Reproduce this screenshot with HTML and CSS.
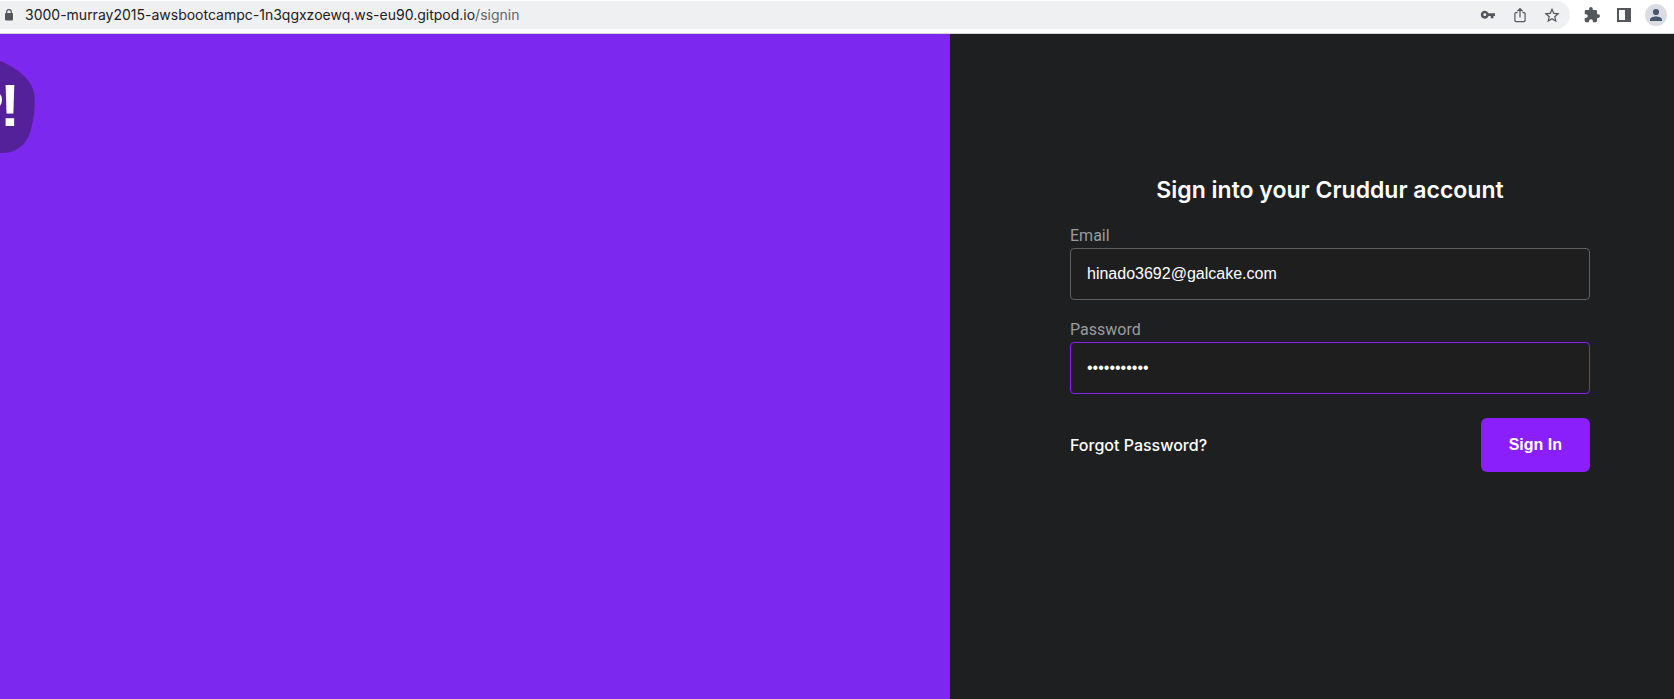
FILE: index.html
```html
<!DOCTYPE html>
<html lang="en">
<head>
<meta charset="utf-8">
<title>Cruddur - Sign in</title>
<link rel="stylesheet" href="styles.css">
</head>
<body>
<header class="toolbar">
  <div class="address">
    <svg class="lock" width="10" height="12" viewBox="0 0 10 12" aria-hidden="true"><rect x="1" y="4" width="8" height="7.500" rx="1" fill="#54575c"/><path d="M2.700 4.500V3a2.300 2.300 0 0 1 4.600 0v1.500" fill="none" stroke="#54575c" stroke-width="1.200"/></svg>
    <span class="url">3000-murray2015-awsbootcampc-1n3qgxzoewq.ws-eu90.gitpod.io<span class="path">/signin</span></span>
    <button class="tool" type="button" aria-label="Passwords"><svg width="16" height="16" viewBox="0 0 16 16"><path fill="#54575c" fill-rule="evenodd" d="M4.800 3.700a4 4 0 1 0 3.800 5.300h2.100v2.300h2.800V9H15V6.300H8.500a4 4 0 0 0-3.700-2.600zm0 2.500a1.450 1.450 0 1 1 0 2.900 1.450 1.450 0 0 1 0-2.900z"/></svg></button>
    <button class="tool" type="button" aria-label="Share"><svg width="16" height="16" viewBox="0 0 16 16" fill="none" stroke="#54575c" stroke-width="1.200"><path d="M5.500 5.600H3.900a1 1 0 0 0-1 1v7a1 1 0 0 0 1 1h8.200a1 1 0 0 0 1-1v-7a1 1 0 0 0-1-1h-1.600M8 10.500V1.800M5.200 4.300 8 1.500l2.800 2.800"/></svg></button>
    <button class="tool" type="button" aria-label="Bookmark"><svg width="16" height="16" viewBox="1 0 22 23"><path fill="#54575c" d="M23 9l-7.900-.7L12 1 8.900 8.300 1 9l6 5.200L5.200 22 12 17.900l6.800 4.100-1.800-7.800L23 9zm-11 6.700-4.100 2.500 1.100-4.700-3.600-3.200 4.800-.4L12 5.500l1.900 4.400 4.700.4-3.600 3.200 1.100 4.700-4.100-2.500z"/></svg></button>
  </div>
  <div class="actions">
    <button class="tool" type="button" aria-label="Extensions"><svg width="16" height="16" viewBox="1 1 22 22"><path fill="#54575c" d="M20.500 11H19V7a2 2 0 0 0-2-2h-4V3.500a2.500 2.500 0 0 0-5 0V5H4a2 2 0 0 0-2 2v3.800h1.500a2.700 2.700 0 0 1 0 5.400H2V20a2 2 0 0 0 2 2h3.800v-1.500a2.700 2.700 0 0 1 5.400 0V22H17a2 2 0 0 0 2-2v-4h1.500a2.500 2.500 0 0 0 0-5z"/></svg></button>
    <button class="tool" type="button" aria-label="Side panel"><svg width="16" height="16" viewBox="0 0 16 16"><path fill="#54575c" fill-rule="evenodd" d="M1 1h14v14H1zM3 3v10h6V3z"/></svg></button>
    <button class="avatar" type="button" aria-label="Profile"><svg width="16" height="16" viewBox="0 0 16 16" fill="#45566d"><circle cx="8" cy="5" r="3.100"/><path d="M2 14v-1.500C2 10.500 5.500 9.500 8 9.500s6 1 6 3V14z"/></svg></button>
  </div>
</header>
<main class="page">
  <section class="brand">
    <svg class="logo" width="36" height="96" viewBox="0 0 36 96" role="img" aria-label="Logo">
      <path fill="#54219b" d="M0 0C10 4 20 10 27 18c5 6 7.500 12 7.700 20 .3 10-1 21-4 31-2 8-6 14-12 18-5 4-11 5-18.700 5z"/>
      <ellipse cx="-6" cy="39" rx="8" ry="9" fill="#fff"/>
      <text class="logo-mark" x="0" y="65">!</text>
    </svg>
  </section>
  <section class="content">
    <form class="signin">
      <h1 class="title">Sign into your Cruddur account</h1>
      <div class="field">
        <label for="email">Email</label>
        <input id="email" type="text" value="hinado3692@galcake.com">
      </div>
      <div class="field">
        <label for="password">Password</label>
        <input class="active" id="password" type="password" value="hunter2pass">
      </div>
      <div class="submit">
        <a class="forgot" href="#forgot">Forgot Password?</a>
        <button class="primary" type="submit">Sign In</button>
      </div>
    </form>
  </section>
</main>
</body>
</html>
```
FILE: styles.css
```css
* { box-sizing: border-box; }
body {
  margin: 0;
  min-height: 100vh;
  display: flex;
  flex-direction: column;
  background: #1e1f21;
  font-family: Inter, "Liberation Sans", sans-serif;
}
button { border: 0; padding: 0; background: none; font: inherit; }
svg { display: block; }

.toolbar {
  display: flex;
  align-items: center;
  height: 34px;
  padding: 1px 7px 4px 0;
  gap: 14px;
  background: #fff;
  border-bottom: 1px solid #d4d6d8;
}
.address {
  flex: 1;
  display: flex;
  align-items: center;
  gap: 16px;
  height: 28px;
  padding: 0 10px 0 4px;
  background: #eff0f2;
  border-radius: 0 14px 14px 0;
}
.url { flex: 1; margin-left: -5px; font-size: 14px; line-height: 20px; color: #202124; white-space: nowrap; }
.path { color: #63666a; }
.tool { width: 16px; height: 16px; }
.actions { display: flex; align-items: center; gap: 16px; }
.avatar {
  display: grid;
  place-items: center;
  width: 22px;
  height: 22px;
  margin-left: -3px;
  border-radius: 50%;
  background: #d9dce2;
}

.page { flex: 1; display: grid; grid-template-columns: 950fr 724fr; }
.brand { background: #7c28ee; padding-top: 27px; }
.logo { overflow: hidden; }
.logo-mark { font: bold 60px "Liberation Sans", Arial, sans-serif; fill: #fff; }

.content { background: #1e1f21; padding: 140px 84px 40px 120px; }
.signin { display: flex; flex-direction: column; gap: 21px; }
.title { margin: 0; font-size: 23px; line-height: 32px; font-weight: 600; text-align: center; color: #fff; }
.field { display: flex; flex-direction: column; }
.field label { font: 16px/18px Roboto, sans-serif; color: #9b9c9d; }
.field input {
  width: 100%;
  height: 52px;
  margin-top: 3px;
  padding: 0 16px;
  border: 1px solid #606060;
  border-radius: 4px;
  background: #1e1e1e;
  color: #fff;
  font: 16px "Liberation Sans", Arial, sans-serif;
  outline: 0;
}
.field .active { border-color: #8a1ffb; }
.submit { display: flex; align-items: center; justify-content: space-between; margin-top: 3px; }
.forgot { color: #fff; font-size: 16px; font-weight: 500; text-decoration: none; }
.primary {
  height: 54px;
  padding: 0 28px;
  border-radius: 6px;
  background: #8a1ffb;
  color: #fff;
  font: bold 16px "Liberation Sans", Arial, sans-serif;
}
```
